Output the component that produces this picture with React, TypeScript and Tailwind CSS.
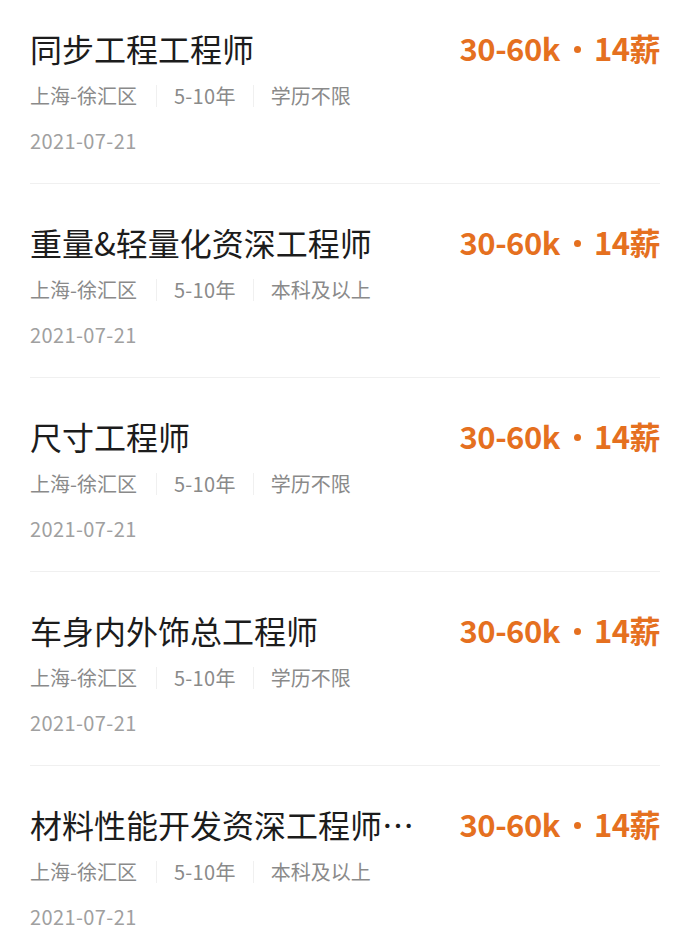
import React from "react";

type Job = { title: string; edu: string };

const jobs: Job[] = [
  { title: "同步工程工程师", edu: "学历不限" },
  { title: "重量&轻量化资深工程师", edu: "本科及以上" },
  { title: "尺寸工程师", edu: "学历不限" },
  { title: "车身内外饰总工程师", edu: "学历不限" },
  { title: "材料性能开发资深工程师…", edu: "本科及以上" },
];

const font = { fontFamily: '"Noto Sans CJK SC", "Noto Sans", sans-serif' };

export default function App() {
  return (
    <div className="w-[690px] h-[946px] overflow-hidden bg-white" style={font}>
      <div className="px-[30px]">
        {jobs.map((j, i) => (
          <div
            key={i}
            className={`${i === 0 ? "pt-[26px]" : "pt-[36px]"} pb-[28px] border-b border-[#f0f0f0]`}
          >
            <div className="flex items-center justify-between h-[44px]">
              <div className="text-[32px] leading-[44px] text-[#1c1c1c] whitespace-nowrap">
                {j.title}
              </div>
              <div className="flex items-center text-[31px] leading-[44px] font-bold text-[#e5701f] whitespace-nowrap tracking-[-0.5px]">
                <span>30-60k</span>
                <span className="ml-[14px] mr-[13px] mt-[2px] w-[7px] h-[7px] rounded-full bg-[#e5701f]" />
                <span>14薪</span>
              </div>
            </div>
            <div className="mt-[12px] flex items-center h-[28px] text-[20px] leading-[28px] text-[#8a8a8a]">
              <span>上海-徐汇区</span>
              <span className="ml-[19px] mr-[17px] w-px h-[22px] bg-[#f0f0f0]" />
              <span className="tracking-[0.3px]">5-10年</span>
              <span className="ml-[17px] mr-[17px] w-px h-[22px] bg-[#f0f0f0]" />
              <span>{j.edu}</span>
            </div>
            <div className="mt-[17px] h-[28px] text-[20px] leading-[28px] text-[#a0a0a0] tracking-[0.4px]">
              2021-07-21
            </div>
          </div>
        ))}
      </div>
    </div>
  );
}
